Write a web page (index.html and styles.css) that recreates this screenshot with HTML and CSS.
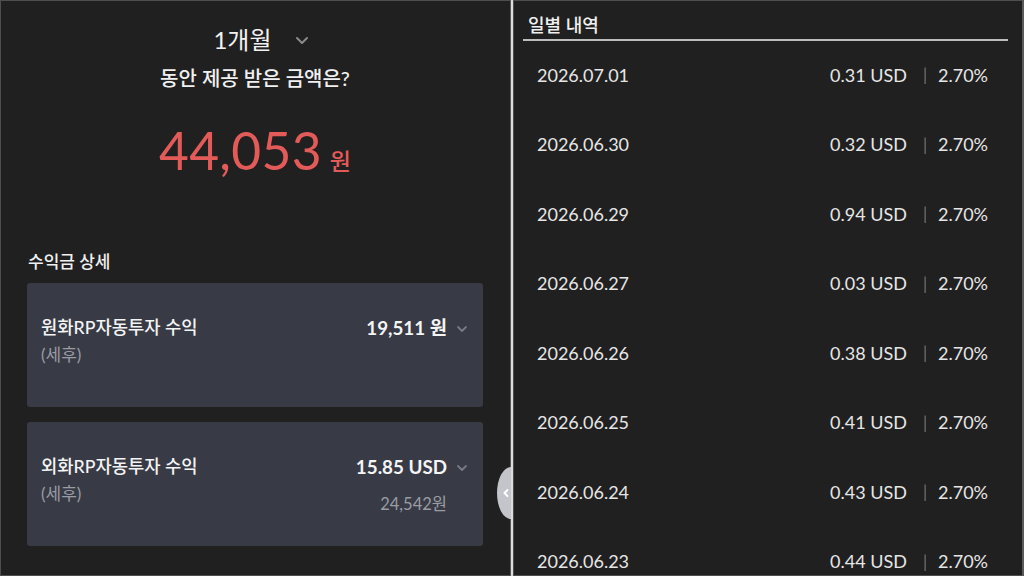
FILE: index.html
```html
<!DOCTYPE html>
<html lang="ko">
<head>
<meta charset="utf-8">
<link rel="stylesheet" href="styles.css">
</head>
<body>
<div class="screen">
  <section class="left">
    <div class="period">
      <span class="period-text">1개월</span>
      <svg class="chev-top" width="14" height="9" viewBox="0 0 14 9"><path d="M2 2 L7 7 L12 2" fill="none" stroke="#8a8a8a" stroke-width="2" stroke-linecap="round" stroke-linejoin="round"/></svg>
    </div>
    <div class="question">동안 제공 받은 금액은?</div>
    <div class="total"><span class="total-num">44,053</span><span class="total-unit">원</span></div>

    <div class="detail-title">수익금 상세</div>
    <div class="card">
      <div class="card-left">
        <div class="card-title">원화RP자동투자 수익</div>
        <div class="card-sub">(세후)</div>
      </div>
      <div class="card-right">
        <div class="card-value">19,511 원
          <svg class="chev" width="12" height="8" viewBox="0 0 12 8"><path d="M2 2 L6 6 L10 2" fill="none" stroke="#777a82" stroke-width="1.8" stroke-linecap="round" stroke-linejoin="round"/></svg>
        </div>
      </div>
    </div>
    <div class="card">
      <div class="card-left">
        <div class="card-title">외화RP자동투자 수익</div>
        <div class="card-sub">(세후)</div>
      </div>
      <div class="card-right">
        <div class="card-value">15.85 USD
          <svg class="chev" width="12" height="8" viewBox="0 0 12 8"><path d="M2 2 L6 6 L10 2" fill="none" stroke="#777a82" stroke-width="1.8" stroke-linecap="round" stroke-linejoin="round"/></svg>
        </div>
        <div class="card-subvalue">24,542원</div>
      </div>
    </div>
  </section>

  <div class="divider"></div>

  <section class="right">
    <div class="daily-head">일별 내역</div>
    <ul class="rows">
      <li class="row"><span class="date">2026.07.01</span><span class="amt">0.31 USD</span><span class="sep">|</span><span class="pct">2.70%</span></li>
      <li class="row"><span class="date">2026.06.30</span><span class="amt">0.32 USD</span><span class="sep">|</span><span class="pct">2.70%</span></li>
      <li class="row"><span class="date">2026.06.29</span><span class="amt">0.94 USD</span><span class="sep">|</span><span class="pct">2.70%</span></li>
      <li class="row"><span class="date">2026.06.27</span><span class="amt">0.03 USD</span><span class="sep">|</span><span class="pct">2.70%</span></li>
      <li class="row"><span class="date">2026.06.26</span><span class="amt">0.38 USD</span><span class="sep">|</span><span class="pct">2.70%</span></li>
      <li class="row"><span class="date">2026.06.25</span><span class="amt">0.41 USD</span><span class="sep">|</span><span class="pct">2.70%</span></li>
      <li class="row"><span class="date">2026.06.24</span><span class="amt">0.43 USD</span><span class="sep">|</span><span class="pct">2.70%</span></li>
      <li class="row"><span class="date">2026.06.23</span><span class="amt">0.44 USD</span><span class="sep">|</span><span class="pct">2.70%</span></li>
    </ul>
  </section>

  <div class="handle">
    <svg width="8" height="10" viewBox="0 0 8 10"><path d="M5.5 2 L2.5 5 L5.5 8" fill="none" stroke="#ffffff" stroke-width="2" stroke-linecap="round" stroke-linejoin="round"/></svg>
  </div>
</div>
</body>
</html>
```

FILE: styles.css
```css
* { box-sizing: border-box; }
html, body { margin: 0; padding: 0; }
body {
  width: 1024px;
  height: 576px;
  overflow: hidden;
  background: #202020;
  font-family: Lato, "Noto Sans CJK KR", "Noto Sans", sans-serif;
  color: #ececec;
}
.screen {
  position: relative;
  display: flex;
  width: 1024px;
  height: 576px;
}
.left {
  width: 511px;
  height: 576px;
  background: #202020;
  border: 1px solid #4e4e4e;
  border-right-color: #5a5a5a;
  display: flex;
  flex-direction: column;
  padding: 21px 27px 0 26px;
}
.divider {
  width: 2px;
  background: #dcdcdc;
}
.right {
  flex: 1;
  height: 576px;
  background: #202020;
  border: 1px solid #4e4e4e;
  border-right: 2px solid #5a5a5a;
  padding: 10px 13px 0 9px;
}

/* left */
.period {
  display: flex;
  justify-content: center;
  align-items: center;
  gap: 23px;
  padding-left: 12px;
  height: 32px;
}
.period-text {
  font-size: 24px;
  color: #f2f2f2;
  font-weight: 400;
}
.chev-top { margin-top: 4px; }
.question {
  text-align: center;
  font-size: 20px;
  font-weight: 500;
  color: #f0f0f0;
  margin-top: 11px;
  line-height: 26px;
}
.total {
  display: flex;
  justify-content: center;
  align-items: baseline;
  gap: 8px;
  margin-top: 26px;
  height: 66px;
  line-height: 66px;
}
.total-num {
  font-family: Lato, sans-serif;
  font-size: 51.5px;
  color: #e35b58;
  font-weight: 400;
  letter-spacing: 0.3px;
}
.total-unit {
  font-size: 23px;
  color: #e35b58;
  font-weight: 500;
}
.detail-title {
  font-size: 17px;
  font-weight: 500;
  color: #f0f0f0;
  margin-top: 68px;
  line-height: 22px;
  padding-left: 1px;
}
.card {
  height: 124px;
  background: #383b46;
  border-radius: 3px;
  display: flex;
  justify-content: space-between;
  align-items: flex-start;
  padding: 34px 15px 0 14px;
  margin-top: 10px;
}
.card + .card { margin-top: 15px; }
.card-title {
  font-size: 17.7px;
  font-weight: 500;
  color: #f4f4f4;
  line-height: 22px;
}
.card-sub {
  font-size: 17px;
  color: #9a9ca3;
  line-height: 22px;
  margin-top: 5px;
}
.card-right {
  display: flex;
  flex-direction: column;
  align-items: flex-end;
}
.card-value {
  display: flex;
  align-items: center;
  gap: 9px;
  font-size: 18.8px;
  font-weight: 700;
  color: #f4f4f4;
  line-height: 22px;
}
.chev { margin-top: 1px; }
.card-subvalue {
  font-size: 16.5px;
  color: #9a9ca3;
  line-height: 22px;
  margin-top: 15px;
  margin-right: 21px;
}

/* right */
.daily-head {
  font-size: 18px;
  font-weight: 500;
  color: #f0f0f0;
  line-height: 28px;
  padding-left: 5px;
  border-bottom: 2px solid #bdbdbd;
  margin-right: 1px;
}
.rows {
  list-style: none;
  margin: -1px 0 0;
  padding: 0;
}
.row {
  height: 69.5px;
  display: flex;
  align-items: center;
  padding: 0 18px 0 14px;
  font-size: 18px;
  color: #e6e6e6;
}
.date { flex: 1; }
.amt { text-align: right; }
.sep {
  color: #b0b0b0;
  margin: 0 11px 0 16px;
  font-size: 17px;
  font-weight: 300;
}
.pct { width: 53px; }

.handle {
  position: absolute;
  left: 497px;
  top: 467px;
  width: 14px;
  height: 52px;
  background: #c4c5cb;
  border-radius: 100% 0 0 100% / 50% 0 0 50%;
  display: flex;
  align-items: center;
  justify-content: center;
  padding-left: 3px;
}
```
